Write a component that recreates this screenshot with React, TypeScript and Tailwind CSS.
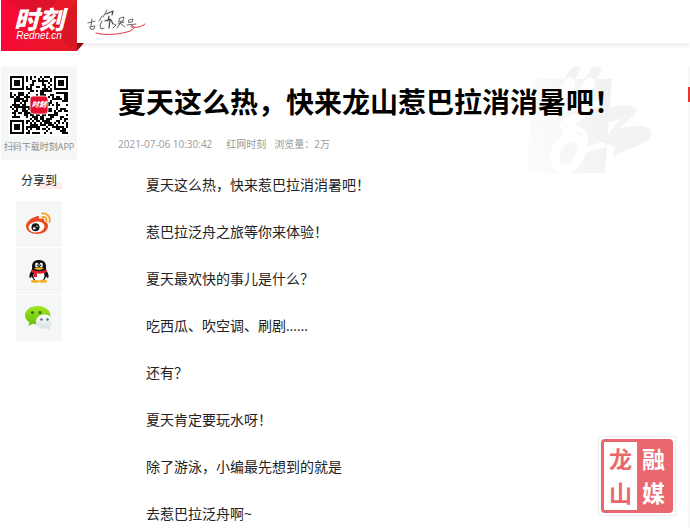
import React from "react";

const paragraphs = [
  "夏天这么热，快来惹巴拉消消暑吧！",
  "惹巴拉泛舟之旅等你来体验！",
  "夏天最欢快的事儿是什么？",
  "吃西瓜、吹空调、刷剧……",
  "还有？",
  "夏天肯定要玩水呀！",
  "除了游泳，小编最先想到的就是",
  "去惹巴拉泛舟啊~",
];

const QR_SIZE = 29;

function finder(x: number, y: number): boolean | null {
  const origins = [
    [0, 0],
    [QR_SIZE - 7, 0],
    [0, QR_SIZE - 7],
  ];
  for (const [ox, oy] of origins) {
    const dx = x - ox;
    const dy = y - oy;
    if (dx >= -1 && dx <= 7 && dy >= -1 && dy <= 7) {
      const ring = Math.max(Math.abs(dx - 3), Math.abs(dy - 3));
      return ring === 3 || ring <= 1;
    }
  }
  return null;
}

function qrPath(): string {
  let seed = 20210706;
  let d = "";
  for (let y = 0; y < QR_SIZE; y++) {
    for (let x = 0; x < QR_SIZE; x++) {
      seed = (seed * 1103515245 + 12345) % 2147483648;
      const fixed = finder(x, y);
      const on = fixed === null ? seed / 2147483648 < 0.52 : fixed;
      if (on) d += `M${x} ${y}h1v1h-1z`;
    }
  }
  return d;
}

function QrCode() {
  return (
    <svg viewBox="-1 -1 31 31" className="block size-[62px] bg-white" role="img" aria-label="二维码" shapeRendering="crispEdges">
      <path d={qrPath()} fill="#080808" />
      <rect x="10" y="10" width="9" height="9" rx="1.6" fill="#e3112f" stroke="#fff" strokeWidth=".4" shapeRendering="auto" />
      <text x="14.5" y="15.6" textAnchor="middle" fontSize="3.6" fontWeight="900" fontStyle="italic" fill="#fff" fontFamily="Noto Sans CJK SC, sans-serif">
        时刻
      </text>
    </svg>
  );
}

function Signature() {
  return (
    <svg viewBox="0 0 60 32" className="h-8 w-[60px]" fill="none" strokeLinecap="round" strokeLinejoin="round" aria-hidden="true">
      <g stroke="#444" strokeWidth=".8">
        <path d="M1 15l7-2M5 11l-1 7M3 19l5-1-1 3-3 .5-1-2.500" />
        <path d="M15 8l-3 5M15 13l-2 4 1 4 3-1M20 2l-4 7" />
        <path d="M19 6l7-3-1 4M22 8l-1 5M18 13l5-2-1 9M24 12l2 4" strokeWidth="1.200" />
        <path d="M27 16l2 1-3 3M33 10l4-1-1 4-4 1zM31 16l6-2M35 13l-5 7M34 16l4 3" />
        <path d="M42 12l4-1-1 3-3 .5zM40 17l9-1" />
      </g>
      <path d="M9 25c11 3 26 1 34-2 4-2 5-4 3-5-2-1-3 1-1 1 4 1 9 0 13-3" stroke="#e3353b" strokeWidth="1" />
    </svg>
  );
}

function WeiboIcon() {
  return (
    <svg viewBox="0 0 26 24" className="h-6 w-[26px]" aria-hidden="true">
      <path d="M9 5c3-2 5-1 4 2 3-1 6-1 5 2 3 1 4 3 4 5 0 5-5 8-11 8-6 0-11-3-11-8 0-4 5-8 9-9z" fill="#e84b24" />
      <ellipse cx="10.5" cy="15" rx="8" ry="5.4" transform="rotate(-6 10.5 15)" fill="#fff" />
      <circle cx="9.5" cy="15.3" r="4" fill="#171717" />
      <ellipse cx="8.3" cy="16.4" rx="1.4" ry="1.1" fill="#fff" />
      <circle cx="11" cy="14.3" r=".7" fill="#fff" />
      <path d="M16 1.5c5-1 9 4 7.500 8.500M16.500 5c2.500-.5 4.500 1.500 3.800 4" fill="none" stroke="#f7a022" strokeWidth="1.900" strokeLinecap="round" />
    </svg>
  );
}

function QqIcon() {
  return (
    <svg viewBox="0 0 20 24" className="h-6 w-5" aria-hidden="true">
      <path d="M3 11C0 15 0 18 1 19c1 0 2-2 2-2h14s1 2 2 2c1-1 1-4-2-8z" fill="#111" />
      <ellipse cx="10" cy="15.500" rx="7.500" ry="7.500" fill="#111" />
      <ellipse cx="10" cy="16.500" rx="5.500" ry="6" fill="#fff" />
      <path d="M3 11V7.500C3 3 6 1 10 1s7 2 7 6.500V11c-3 3-11 3-14 0z" fill="#111" />
      <ellipse cx="7.800" cy="6" rx="1.700" ry="2.300" fill="#fff" />
      <ellipse cx="12.200" cy="6" rx="1.700" ry="2.300" fill="#fff" />
      <circle cx="8.300" cy="6.300" r=".8" fill="#111" />
      <circle cx="11.700" cy="6.300" r=".8" fill="#111" />
      <path d="M5 9c3-1 7-1 10 0-2 2.500-8 2.500-10 0z" fill="#f8ae1c" />
      <path d="M2.500 10.500c4 2.300 11 2.300 15 0l.5 2.300c-3 1.800-7 2.200-10 1.800V18H5v-4l-3-1.200z" fill="#e51f2b" />
      <ellipse cx="6" cy="22.300" rx="4" ry="1.500" fill="#f8ae1c" />
      <ellipse cx="14" cy="22.300" rx="4" ry="1.500" fill="#f8ae1c" />
    </svg>
  );
}

function WechatIcon() {
  return (
    <svg viewBox="0 0 28 24" className="h-6 w-7" aria-hidden="true">
      <defs>
        <linearGradient id="wechat-green" x2="0" y2="1">
          <stop stopColor="#a2e51f" />
          <stop offset="1" stopColor="#64bf09" />
        </linearGradient>
        <linearGradient id="wechat-white" x2="0" y2="1">
          <stop stopColor="#fafcfd" />
          <stop offset="1" stopColor="#d6dfe4" />
        </linearGradient>
      </defs>
      <path d="M12.500 0C5.600 0 0 4 0 9.300c0 3 1.700 5.400 4.300 7L3.500 20l4.200-2.300c8.500 2 17.600-1.500 17.600-8.400C25.300 4 19.700 0 12.500 0z" fill="url(#wechat-green)" />
      <circle cx="7.500" cy="6.500" r="1.500" fill="#2f6f16" />
      <circle cx="15" cy="6.500" r="1.500" fill="#2f6f16" />
      <path d="M19.500 8.500c-5 0-8.700 3.200-8.700 7.200 0 4.800 5.300 8 11 6.600l3.500 1.700-.8-3.200c5.500-4.300 2.500-12.300-5-12.300z" fill="url(#wechat-white)" />
      <circle cx="16.500" cy="13.500" r="1.200" fill="#59686e" />
      <circle cx="22.500" cy="13.500" r="1.200" fill="#59686e" />
    </svg>
  );
}

function Watermark() {
  return (
    <svg viewBox="0 0 126 108" className="absolute -top-[1px] right-[35px] -z-10 h-[108px] w-[126px]" aria-hidden="true">
      <defs>
        <linearGradient id="mark-fade" x1="0" y1=".6" x2="1" y2=".4">
          <stop stopColor="#fcfcfc" />
          <stop offset="1" stopColor="#f1f1f1" />
        </linearGradient>
      </defs>
      <path d="M6 13h79l-7 94H0z" fill="url(#mark-fade)" />
      <path d="M37 13l5-8c3-6 13-6 11 0l-5 8zM57 13l6-8c3-6 13-6 11 0l-5 8z" fill="#f3f3f3" />
      <g stroke="#fff" fill="none" strokeLinecap="round" strokeLinejoin="round">
        <path d="M43 17l-8 13M63 17l-8 13" strokeWidth="11" />
        <path d="M39 43l34-6M35 59c6-7 15-8 22-12" strokeWidth="6" />
        <path d="M60 43c-5 8-18 15-22 24 8-6 19-5 20 4 1 6-2 10-4 14l22-6" strokeWidth="6" />
        <ellipse cx="41" cy="87" rx="12" ry="17" strokeWidth="9" transform="rotate(30 41 87)" />
      </g>
      <path d="M82 43c8-4 20-6 26-1 4 4-3 9-10 15l-6 5c10-2 32-5 33 5 0 7-13 13-22 16-7 2-11 4-13 6-3 3-5 2-4-2l3-6c-4-1-9-2-9-5l2-9 13-15c-7 3-14 5-15 1z" fill="#f3f3f3" />
    </svg>
  );
}

function Logo() {
  return (
    <a href="#" className="relative flex h-[51px] w-[76px] shrink-0 flex-col items-center bg-linear-to-r from-[#f80637] to-[#e31b23] pt-[7px] text-white italic">
      <svg viewBox="0 0 76 51" className="absolute inset-0 size-full" aria-hidden="true">
        <path d="M57 0L33 24 9 0zM76 2L49 29l22 22h5z" fill="#b91025" opacity=".25" />
      </svg>
      <span className="relative text-[25px] leading-[24px] font-black">时刻</span>
      <span className="relative font-['Liberation_Sans'] text-[10px] leading-[10px]">Rednet.cn</span>
      <svg viewBox="0 0 7 8" className="absolute bottom-0 left-full h-2 w-[7px]" aria-hidden="true">
        <path d="M0 0h7L0 8z" fill="#8f0d12" />
      </svg>
    </a>
  );
}

const shares = [
  { name: "微博", icon: <WeiboIcon /> },
  { name: "QQ", icon: <QqIcon /> },
  { name: "微信", icon: <WechatIcon /> },
];

function ShareColumn() {
  return (
    <aside className="w-[76px] shrink-0">
      <div className="flex flex-col items-center bg-[#f5f7f7] pt-[7px] pb-[5px]">
        <QrCode />
        <p className="mt-[2px] text-[9px] leading-[17px] whitespace-nowrap text-[#8b8b8b]">扫码下载时刻APP</p>
      </div>
      <h2 className="relative isolate mx-auto mt-3 w-[46px] text-center text-[12px] leading-[18px] text-[#222]">
        分享到
        <span className="absolute right-0 bottom-px -z-10 h-[7px] w-[23px] bg-[#fdeaea]" />
      </h2>
      <div className="mx-auto mt-[11px] flex w-[46px] flex-col gap-px">
        {shares.map((share) => (
          <button key={share.name} type="button" aria-label={share.name} className="flex h-[46px] items-center justify-center bg-[#f5f7f7]">
            {share.icon}
          </button>
        ))}
      </div>
    </aside>
  );
}

function Seal() {
  return (
    <div className="fixed right-[14px] bottom-3 border border-[#eee] bg-white p-[2px] text-[23px] leading-[34px]">
      <div className="flex rounded-[4px] border-[3px] border-[#e9686d] bg-[#e9686d] text-center font-bold">
        <div className="w-[33px] bg-white text-[#e9686d]">
          <div>龙</div>
          <div>山</div>
        </div>
        <div className="w-[33px] text-white">
          <div>融</div>
          <div>媒</div>
        </div>
      </div>
    </div>
  );
}

export default function App() {
  return (
    <div className="h-screen overflow-hidden bg-white font-['Open_Sans','Noto_Sans_CJK_SC',sans-serif]">
      <header className="relative flex h-[43px] bg-white pl-px shadow-[0_2px_6px_rgba(0,0,0,0.09)]">
        <Logo />
        <a href="#" aria-label="签名" className="mt-2 ml-[10px] h-8">
          <Signature />
        </a>
      </header>
      <main className="flex items-start pt-6 pl-px">
        <ShareColumn />
        <article className="relative isolate ml-[41px] min-w-0 flex-1">
          <Watermark />
          <h1 className="pt-[15px] text-[28px] leading-[40px] font-bold whitespace-nowrap text-black">夏天这么热，快来龙山惹巴拉消消暑吧！</h1>
          <div className="mt-[14px] flex items-center gap-2 text-[10px] leading-[16px] text-[#999]">
            <time className="pr-1.5">2021-07-06 10:30:42</time>
            <span>红网时刻</span>
            <span>浏览量：2万</span>
          </div>
          <div className="mt-[9px] pl-7 text-[14px] leading-[47px] text-[#222]">
            {paragraphs.map((text) => (
              <p key={text}>{text}</p>
            ))}
          </div>
        </article>
        <aside className="h-screen w-[2px] shrink-0 bg-[#f6f6f6] pt-5">
          <div className="h-[15px] bg-[#e8352e]" />
        </aside>
      </main>
      <Seal />
    </div>
  );
}
